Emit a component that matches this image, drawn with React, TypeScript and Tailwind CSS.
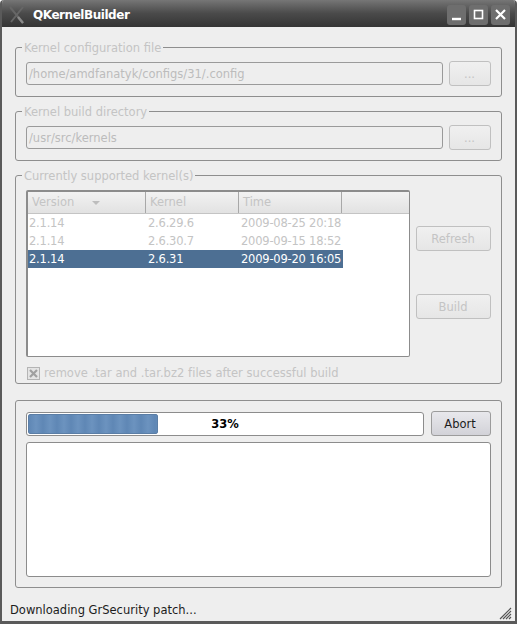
const F = "[font-family:'DejaVu_Sans',sans-serif]";

function Group({ title, className, children }: { title?: string; className: string; children: React.ReactNode }) {
  return (
    <div className={`relative rounded-[3px] border border-[#8e8e8e] ${className}`}>
      {title && (
        <span className="absolute left-[6px] top-[-8px] bg-[#eeeeee] px-[2px] text-[11.5px] leading-[16px] text-[#c4c4c4]">{title}</span>
      )}
      {children}
    </div>
  );
}

function DisabledButton({ label, className }: { label: string; className: string }) {
  return (
    <div className={`flex items-center justify-center rounded-[3px] border border-[#c0c0c0] bg-gradient-to-b from-[#f0f0f0] to-[#e6e6e6] pr-[1px] pt-[2px] text-[11.5px] text-[#c4c4c4] ${className}`}>
      {label}
    </div>
  );
}

function PathRow({ value }: { value: string }) {
  return (
    <div className="flex items-center gap-[6px] pl-[10px] pr-[10px] pt-[13px]">
      <div className="flex h-[23px] w-[417px] items-center rounded-[3px] border border-[#9a9a9a] bg-[#eeeeee] pl-[2px] pt-[2px] text-[11.5px] text-[#bcbcbc]">{value}</div>
      <DisabledButton label="..." className="h-[25px] w-[42px]" />
    </div>
  );
}

const rows = [
  ["2.1.14", "2.6.29.6", "2009-08-25 20:18"],
  ["2.1.14", "2.6.30.7", "2009-09-15 18:52"],
  ["2.1.14", "2.6.31", "2009-09-20 16:05"],
];

function Cell({ w, children }: { w: string; children: React.ReactNode }) {
  return <div className={`flex items-center pl-[1px] pt-[1px] ${w}`}>{children}</div>;
}

function HeaderCell({ w, children, last }: { w: string; children?: React.ReactNode; last?: boolean }) {
  return (
    <div className={`flex h-full items-center pl-[4px] pt-[1px] ${w} ${last ? "" : "border-r border-[#a8a8a8]"}`}>{children}</div>
  );
}

export default function App() {
  return (
    <div className={`flex h-[624px] w-[517px] flex-col overflow-hidden rounded-t-[4px] border-x-[2px] border-b-[3px] border-[#5a5a5a] bg-[#eeeeee] ${F}`}>
      <div className="-mx-[2px] flex h-[27px] shrink-0 items-center bg-gradient-to-b from-[#767676] via-[#4a4a4a] to-[#353535] pl-[9px] pr-[7px] pt-[2px]">
        <svg width="16" height="18" viewBox="0 0 16 18" className="shrink-0">
          <path d="M1 1 L14 17 M14 1 L2 16" stroke="#666" strokeWidth="2" fill="none" />
          <path d="M9 11 L14 17" stroke="#8a8a8a" strokeWidth="2.4" fill="none" />
        </svg>
        <span className="ml-[8px] text-[12px] font-bold tracking-[-0.45px] text-white">QKernelBuilder</span>
        <div className="ml-auto flex gap-[3px]">
          {[0, 1, 2].map((i) => (
            <div key={i} className="flex h-[20px] w-[19px] items-center justify-center rounded-[3px] bg-[#6e6e6e]">
              <svg width="13" height="13" viewBox="0 0 13 13">
                {i === 0 && <path d="M2 11 H11" stroke="#fff" strokeWidth="2.4" />}
                {i === 1 && <rect x="2.5" y="2.5" width="8" height="8" stroke="#fff" strokeWidth="1.6" fill="none" />}
                {i === 2 && <path d="M2 2 L11 11 M11 2 L2 11" stroke="#fff" strokeWidth="2.2" />}
              </svg>
            </div>
          ))}
        </div>
      </div>

      <div className="flex min-h-0 flex-1 flex-col pl-[13px] pr-[13px] pt-[20px]">
        <Group title="Kernel configuration file" className="h-[50px] w-[487px] shrink-0">
          <PathRow value="/home/amdfanatyk/configs/31/.config" />
        </Group>
        <Group title="Kernel build directory" className="mt-[14px] h-[50px] w-[487px] shrink-0">
          <PathRow value="/usr/src/kernels" />
        </Group>
        <Group title="Currently supported kernel(s)" className="mt-[14px] h-[209px] w-[487px] shrink-0 pl-[10px] pt-[14px]">
          <div className="flex gap-[6px]">
            <div className="h-[167px] w-[384px] rounded-[2px] border-[2px] border-[#8c8c8c] border-b-[1px] border-r-[1px] bg-white text-[11.5px] text-[#c4c4c4]">
              <div className="flex h-[22px] border-b border-[#c4c4c4] bg-gradient-to-b from-[#f2f2f2] to-[#e2e2e2]">
                <HeaderCell w="w-[118px]">
                  Version
                  <svg width="8" height="4" viewBox="0 0 8 4" className="ml-[18px]"><path d="M0 0 H8 L4 4 Z" fill="#bdbdbd" /></svg>
                </HeaderCell>
                <HeaderCell w="w-[93px]">Kernel</HeaderCell>
                <HeaderCell w="w-[103px]">Time</HeaderCell>
                <HeaderCell w="flex-1" last />
              </div>
              {rows.map((r, i) => (
                <div key={i} className={`flex h-[18px] w-[315px] tracking-[-0.22px] ${i === 2 ? "bg-[#4d6f93] text-white" : ""}`}>
                  <Cell w="w-[118px]">{r[0]}</Cell>
                  <Cell w="w-[93px] pl-[2px]">{r[1]}</Cell>
                  <Cell w="w-[104px] pl-[2px]"><span className="whitespace-nowrap">{r[2]}</span></Cell>
                </div>
              ))}
            </div>
            <div className="flex w-[75px] flex-col pt-[36px]">
              <DisabledButton label="Refresh" className="h-[25px]" />
              <DisabledButton label="Build" className="mt-[43px] h-[25px]" />
            </div>
          </div>
          <div className="mt-[8px] flex items-center pl-[1px] text-[11.5px] tracking-[0.04px] text-[#c4c4c4]">
            <svg width="13" height="13" viewBox="0 0 13 13" className="shrink-0">
              <rect x="0.5" y="0.5" width="12" height="12" fill="#e4e4e4" stroke="#b4b4b4" />
              <path d="M3 3 L10 10 M10 3 L3 10" stroke="#a0a0a0" strokeWidth="2.2" />
            </svg>
            <span className="ml-[4px]">remove .tar and .tar.bz2 files after successful build</span>
          </div>
        </Group>
        <Group className="mt-[16px] h-[188px] w-[487px] shrink-0 pl-[10px] pt-[10px]">
          <div className="flex items-center gap-[7px]">
            <div className="relative h-[24px] w-[398px] rounded-[3px] border border-[#8c8c8c] bg-white p-[1px]">
              <div
                className="h-full w-[130px] rounded-[2px] border border-[#5b7ea6] bg-[repeating-linear-gradient(90deg,#5f87b5_0px,#6c93bf_7px,#5f87b5_14px)]"
              />
              <span className="absolute inset-0 flex items-center justify-center pt-[2px] text-[11.5px] font-bold text-black">33%</span>
            </div>
            <div className="flex h-[25px] w-[60px] items-center justify-center rounded-[3px] border border-[#9c9c9c] bg-gradient-to-b from-[#e8e8ec] to-[#d2d2d8] pr-[2px] pt-[2px] text-[11.5px] text-[#1c1c1c]">Abort</div>
          </div>
          <div className="mt-[6px] h-[135px] w-[465px] rounded-[3px] border border-[#8c8c8c] bg-white" />
        </Group>
        <div className="relative flex-1">
          <span className="absolute bottom-[3px] left-[-5px] text-[11.5px] leading-[16px] text-[#1c1c1c]">Downloading GrSecurity patch...</span>
          <svg width="13" height="13" viewBox="0 0 13 13" className="absolute bottom-[1px] right-[-10px]">
            <path d="M1 12 L12 1 M4 12 L12 4 M7 12 L12 7 M10 12 L12 10" stroke="#555" strokeWidth="1.2" />
          </svg>
        </div>
      </div>
    </div>
  );
}
